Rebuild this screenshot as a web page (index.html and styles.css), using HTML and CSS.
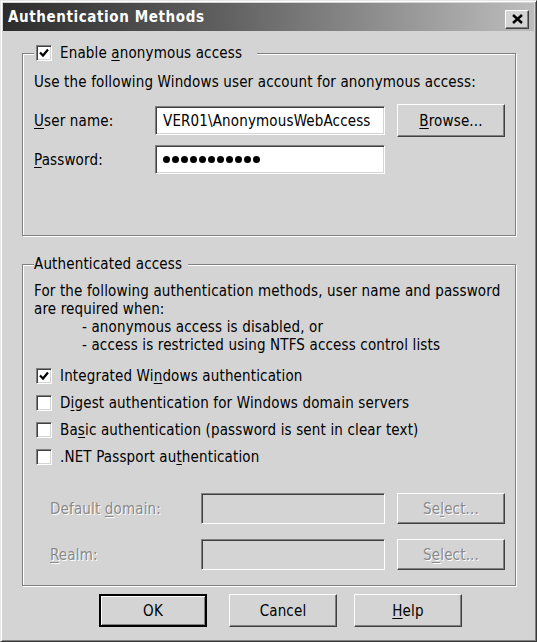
FILE: index.html
```html
<!DOCTYPE html>
<html>
<head>
<meta charset="utf-8">
<title>Authentication Methods</title>
<link rel="stylesheet" href="styles.css">
</head>
<body>
<div class="window">
  <div class="titlebar">
    <span class="title">Authentication Methods</span>
    <span class="close" aria-label="Close">
      <svg width="11" height="10" viewBox="0 0 11 10"><path d="M1 1 L10 9 M10 1 L1 9" stroke="#000" stroke-width="2.4" fill="none"/></svg>
    </span>
  </div>
  <div class="body">
    <fieldset class="group group-anon">
      <legend class="legend legend-check">
        <span class="cb"><svg width="10" height="10" viewBox="0 0 10 10"><path d="M1 4.5 L4 7.5 L9 1.5" stroke="#000" stroke-width="2.2" fill="none"/></svg></span>
        <span>Enable <u>a</u>nonymous access</span>
      </legend>
      <p class="line">Use the following Windows user account for anonymous access:</p>
      <div class="field-row row-user">
        <span class="label"><u>U</u>ser name:</span>
        <div class="input">VER01\AnonymousWebAccess</div>
        <span class="btn btn-side"><span><u>B</u>rowse...</span></span>
      </div>
      <div class="field-row row-pass">
        <span class="label"><u>P</u>assword:</span>
        <div class="input input-pass" aria-label="password">
          <i></i><i></i><i></i><i></i><i></i><i></i><i></i><i></i><i></i><i></i><i></i>
        </div>
      </div>
    </fieldset>

    <fieldset class="group group-auth">
      <legend class="legend legend-text">Authenticated access</legend>
      <p class="line">For the following authentication methods, user name and password</p>
      <p class="line">are required when:</p>
      <p class="line indent">- anonymous access is disabled, or</p>
      <p class="line indent">- access is restricted using NTFS access control lists</p>
      <div class="checks">
        <div class="check-row">
          <span class="cb"><svg width="10" height="10" viewBox="0 0 10 10"><path d="M1 4.5 L4 7.5 L9 1.5" stroke="#000" stroke-width="2.2" fill="none"/></svg></span>
          <span>Integrated Wi<u>n</u>dows authentication</span>
        </div>
        <div class="check-row">
          <span class="cb"></span>
          <span>D<u>i</u>gest authentication for Windows domain servers</span>
        </div>
        <div class="check-row">
          <span class="cb"></span>
          <span>Ba<u>s</u>ic authentication (password is sent in clear text)</span>
        </div>
        <div class="check-row">
          <span class="cb"></span>
          <span>.NET Passport au<u>t</u>hentication</span>
        </div>
      </div>
      <div class="field-row row-domain disabled">
        <span class="label label-indent">Default <u>d</u>omain:</span>
        <div class="input input-disabled"></div>
        <span class="btn btn-side"><span>Se<u>l</u>ect...</span></span>
      </div>
      <div class="field-row row-realm disabled">
        <span class="label label-indent"><u>R</u>ealm:</span>
        <div class="input input-disabled"></div>
        <span class="btn btn-side"><span>S<u>e</u>lect...</span></span>
      </div>
    </fieldset>

    <div class="buttons">
      <span class="btn btn-main btn-default"><span>OK</span></span>
      <span class="btn btn-main"><span>Cancel</span></span>
      <span class="btn btn-main"><span><u>H</u>elp</span></span>
    </div>
  </div>
</div>
</body>
</html>
```

FILE: styles.css
```css
html, body {
  margin: 0;
  padding: 0;
  background: #d4d4d4;
}

body {
  font-family: "DejaVu Sans", "Liberation Sans", sans-serif;
  font-stretch: condensed;
  font-size: 15px;
  letter-spacing: 0.15px;
  color: #000;
}

u {
  text-decoration: underline;
  text-underline-offset: 2px;
  text-decoration-thickness: 1px;
}

.window {
  width: 537px;
  height: 642px;
  box-sizing: border-box;
  background: #d4d4d4;
  border: 1px solid;
  border-color: #e6e6e6 #3a3a3a #3a3a3a #e6e6e6;
  box-shadow: inset 1px 1px 0 #fff, inset -1px -1px 0 #808080;
  padding: 2px;
  display: flex;
  flex-direction: column;
}

.titlebar {
  height: 28px;
  flex: none;
  display: flex;
  align-items: center;
  justify-content: space-between;
  padding: 0 5px 0 5px;
  background: linear-gradient(to right, #2c2c2c 0%, #5e5e5e 40%, #bdbdbd 100%);
  color: #fff;
}

.title {
  font-weight: bold;
  font-size: 15px;
  letter-spacing: 0.6px;
}

.close {
  width: 24px;
  height: 19px;
  box-sizing: border-box;
  margin-top: 4px;
  background: #d4d4d4;
  border: 1px solid;
  border-color: #fff #404040 #404040 #fff;
  box-shadow: inset -1px -1px 0 #808080;
  display: flex;
  align-items: center;
  justify-content: center;
}

.body {
  flex: 1;
  display: flex;
  flex-direction: column;
  padding: 13px 18px 0 19px;
}

.group {
  margin: 0;
  border: 1px solid #808080;
  box-shadow: inset 1px 1px 0 #fff, 1px 1px 0 #fff;
  padding: 11px 11px 61px 11px;
  min-width: 0;
}

.group-auth {
  margin-top: 19px;
  padding: 9px 11px 15px 11px;
}

.legend {
  height: 18px;
  line-height: 18px;
  background: #d4d4d4;
  display: flex;
  align-items: center;
}

.legend-check {
  padding: 0 15px 0 2px;
  gap: 8px;
}

.legend-text {
  padding: 0 6px 0 0;
}

.line {
  margin: 0;
  height: 18px;
  line-height: 18px;
  white-space: nowrap;
}

.indent {
  padding-left: 48px;
}

.field-row {
  display: flex;
  align-items: center;
}

.row-user {
  margin-top: 13px;
  height: 33px;
}

.row-pass {
  margin-top: 8px;
  height: 29px;
}

.row-domain {
  margin-top: 23px;
  height: 31px;
}

.row-realm {
  margin-top: 15px;
  height: 31px;
}

.label {
  width: 121px;
  flex: none;
  white-space: nowrap;
}

.label-indent {
  width: 167px;
  box-sizing: border-box;
  padding-left: 16px;
}

.input {
  width: 230px;
  height: 29px;
  flex: none;
  box-sizing: border-box;
  background: #fff;
  border: 1px solid;
  border-color: #808080 #fff #fff #808080;
  box-shadow: inset 1px 1px 0 #404040, inset -1px -1px 0 #d4d4d4;
  padding: 0 0 0 7px;
  display: flex;
  align-items: center;
  overflow: hidden;
  white-space: nowrap;
}

.input-pass {
  gap: 2px;
}

.input-pass i {
  width: 7px;
  height: 7px;
  border-radius: 50%;
  background: #000;
  flex: none;
}

.input-disabled {
  width: 184px;
  height: 31px;
  background: #d4d4d4;
}

.btn {
  height: 33px;
  box-sizing: border-box;
  background: #d4d4d4;
  border: 1px solid;
  border-color: #fff #404040 #404040 #fff;
  box-shadow: inset -1px -1px 0 #808080;
  display: flex;
  align-items: center;
  justify-content: center;
  white-space: nowrap;
  flex: none;
}

.btn-side {
  width: 108px;
  margin-left: 12px;
}

.row-domain .btn-side,
.row-realm .btn-side {
  height: 31px;
}

.disabled .label,
.disabled .btn {
  color: #8a8a8a;
  text-shadow: 1px 1px 0 #fff;
}

.checks {
  margin-top: 8px;
  display: flex;
  flex-direction: column;
}

.check-row {
  height: 27px;
  display: flex;
  align-items: center;
  gap: 8px;
  padding-left: 2px;
  white-space: nowrap;
}

.cb {
  width: 16px;
  height: 16px;
  flex: none;
  box-sizing: border-box;
  background: #fff;
  border: 1px solid;
  border-color: #808080 #fff #fff #808080;
  box-shadow: inset 1px 1px 0 #404040, inset -1px -1px 0 #d4d4d4;
  display: flex;
  align-items: center;
  justify-content: center;
}

.buttons {
  margin-top: 8px;
  padding-left: 77px;
  display: flex;
  gap: 17px;
}

.btn-main {
  width: 108px;
  height: 33px;
}

.btn-default {
  margin-right: 5px;
  border: 2px solid #000;
  box-shadow: inset 1px 1px 0 #fff, inset -1px -1px 0 #808080;
}
```
